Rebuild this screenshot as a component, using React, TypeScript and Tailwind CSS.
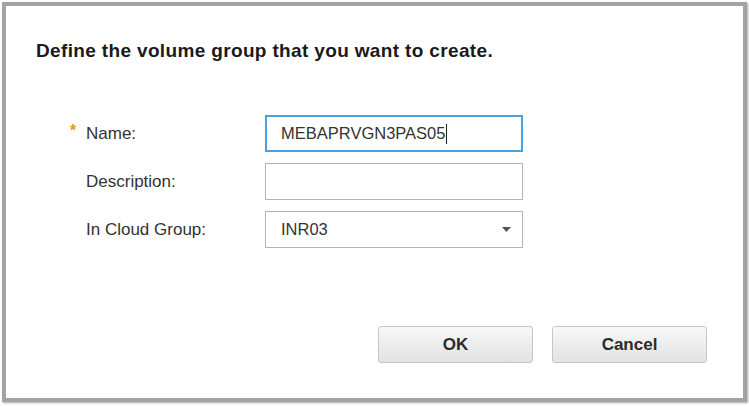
const fields = [
  { label: "Name:", required: true },
  { label: "Description:", required: false },
  { label: "In Cloud Group:", required: false },
];

export default function App() {
  return (
    <div
      className="w-[749px] h-[407px] bg-white pt-[2px] pl-[2px] overflow-hidden"
      style={{ fontFamily: "'Liberation Sans', Arial, sans-serif" }}
    >
      <div className="w-[745px] h-[400px] border-4 border-[#a3a3a3] bg-white shadow-[1px_1px_2px_rgba(0,0,0,0.35)] flex flex-col pt-[34px] pl-[30px] pr-[36px]">
        {/* title */}
        <h1 className="text-[19px] leading-[22px] font-bold text-[#1a1a1a] tracking-[0.35px]">
          Define the volume group that you want to create.
        </h1>

        {/* form */}
        <div className="mt-[53px] flex flex-col gap-[11px]">
          {fields.map((f, i) => (
            <div key={f.label} className="flex items-center h-[37px]">
              <div className="w-[229px] flex items-center text-[17px] text-[#333]">
                <span className="w-[50px] pl-[34px] text-[#f0932b] text-[16px] font-bold -mt-[5px]">
                  {f.required ? "*" : ""}
                </span>
                <span>{f.label}</span>
              </div>
              {i === 0 && (
                <div className="w-[258px] h-[37px] border-2 border-[#4aa3dc] flex items-center pl-[14px] text-[16.5px] text-[#333]">
                  MEBAPRVGN3PAS05
                  <span className="inline-block w-px h-[20px] bg-[#222] ml-[1px]" />
                </div>
              )}
              {i === 1 && (
                <div className="w-[258px] h-[37px] border border-[#b4b4b4]" />
              )}
              {i === 2 && (
                <div className="w-[258px] h-[37px] border border-[#b4b4b4] flex items-center justify-between pl-[15px] pr-[11px] text-[16.5px] text-[#333]">
                  <span>INR03</span>
                  <svg width="9" height="5" viewBox="0 0 9 5">
                    <path d="M0 0h9L4.5 5z" fill="#555" />
                  </svg>
                </div>
              )}
            </div>
          ))}
        </div>

        {/* buttons */}
        <div className="mt-[78px] flex justify-end gap-[19px]">
          {["OK", "Cancel"].map((b) => (
            <button
              key={b}
              className="w-[155px] h-[37px] rounded-[3px] border border-[#c6c6c6] bg-gradient-to-b from-[#f8f8f8] to-[#e2e2e2] text-[17px] font-bold text-[#2a2a2a]"
            >
              {b}
            </button>
          ))}
        </div>
      </div>
    </div>
  );
}
